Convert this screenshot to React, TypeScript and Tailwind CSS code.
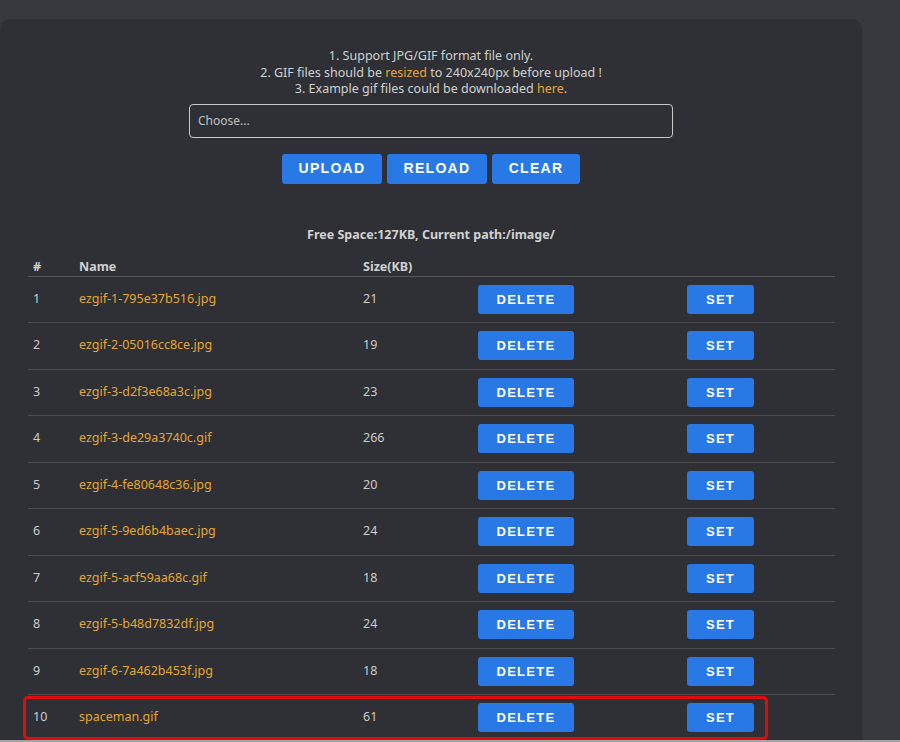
import React from "react";

const rows = [
  ["1", "ezgif-1-795e37b516.jpg", "21"],
  ["2", "ezgif-2-05016cc8ce.jpg", "19"],
  ["3", "ezgif-3-d2f3e68a3c.jpg", "23"],
  ["4", "ezgif-3-de29a3740c.gif", "266"],
  ["5", "ezgif-4-fe80648c36.jpg", "20"],
  ["6", "ezgif-5-9ed6b4baec.jpg", "24"],
  ["7", "ezgif-5-acf59aa68c.gif", "18"],
  ["8", "ezgif-5-b48d7832df.jpg", "24"],
  ["9", "ezgif-6-7a462b453f.jpg", "18"],
  ["10", "spaceman.gif", "61"],
];

const btn =
  "h-[29px] rounded-[3px] bg-[#2878e6] text-white font-bold text-[13px] tracking-[1.3px] flex items-center justify-center [font-family:'Liberation_Sans',Arial,sans-serif]";

export default function App() {
  return (
    <div className="h-[742px] w-[900px] overflow-hidden bg-[#36393e] relative [font-family:'Noto_Sans',sans-serif] text-[#d2d2d2]">
      <div className="mt-[19px] w-[862px] h-[760px] rounded-t-[10px] bg-[#2e3035] pt-[29px] flex flex-col items-center">
        <div className="text-[12.5px] leading-[16.5px] text-center text-[#d0d0d0]">
          <div>1. Support JPG/GIF format file only.</div>
          <div>
            2. GIF files should be <span className="text-[#e8a630]">resized</span> to 240x240px before upload !
          </div>
          <div>
            3. Example gif files could be downloaded <span className="text-[#e8a630]">here</span>.
          </div>
        </div>
        <div className="mt-[6px] w-[484px] h-[34px] border border-[#c9c9c9] rounded-[4px] flex items-center px-[8px] text-[12px] text-[#c0c0c0]">
          Choose...
        </div>
        <div className="mt-[16px] flex gap-[5px]">
          <div className={btn + " w-[100px] h-[30px] text-[14px]"}>UPLOAD</div>
          <div className={btn + " w-[100px] h-[30px] text-[14px]"}>RELOAD</div>
          <div className={btn + " w-[88px] h-[30px] text-[14px]"}>CLEAR</div>
        </div>
        <div className="mt-[41px] text-[12.5px] leading-[20px] font-bold text-[#d0d0d0]">
          Free Space:127KB, Current path:/image/
        </div>
        <div className="mt-[11px] w-[807px] self-start ml-[28px] text-[12.5px]">
          <div className="grid grid-cols-[46px_284px_115px_209px_153px] h-[20px] border-b border-[#55575b] font-bold text-[#d0d0d0] leading-[18px] items-end box-content">
            <div className="pl-[5px]">#</div>
            <div className="pl-[5px]">Name</div>
            <div className="pl-[5px]">Size(KB)</div>
            <div></div>
            <div></div>
          </div>
          {rows.map((r, i) => (
            <div
              key={i}
              className="relative grid grid-cols-[46px_284px_115px_209px_153px] h-[46.5px] border-b border-[#4a4c50] items-center"
            >
              <div className="pl-[5px] text-[#cccccc]">{r[0]}</div>
              <div className="pl-[5px] text-[#e5a630]">{r[1]}</div>
              <div className="pl-[5px] text-[#cccccc]">{r[2]}</div>
              <div className="pl-[5px]">
                <div className={btn + " w-[96px]"}>DELETE</div>
              </div>
              <div className="pl-[5px]">
                <div className={btn + " w-[67px]"}>SET</div>
              </div>
              {i === 9 && (
                <div className="absolute left-[-5px] top-[1px] w-[745px] h-[44px] border-[3px] border-[#e00d0d] rounded-[5px]" />
              )}
            </div>
          ))}
        </div>
      </div>
      <div className="absolute bottom-0 left-0 w-full h-[2px] bg-[#a3a3a3]" />
    </div>
  );
}
